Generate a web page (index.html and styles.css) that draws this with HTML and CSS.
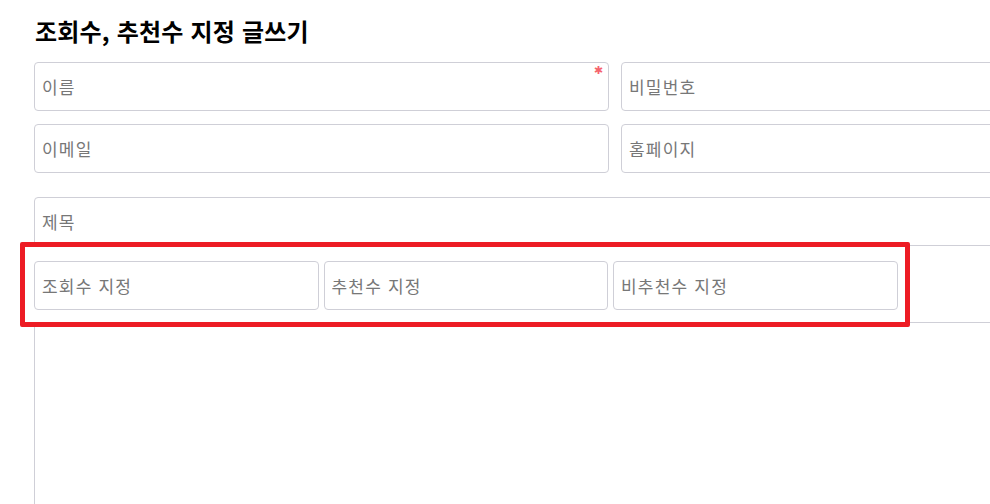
FILE: index.html
```html
<!DOCTYPE html>
<html lang="ko">
<head>
  <meta charset="UTF-8">
  <title>조회수, 추천수 지정 글쓰기</title>
  <link rel="stylesheet" href="styles.css">
</head>
<body>
  <div class="page">
    <h2 class="title">조회수, 추천수 지정 글쓰기</h2>

    <div class="row">
      <div class="field">
        <input type="text" placeholder="이름">
        <span class="req">✱</span>
      </div>
      <div class="field">
        <input type="password" placeholder="비밀번호">
      </div>
    </div>

    <div class="row">
      <div class="field">
        <input type="text" placeholder="이메일">
      </div>
      <div class="field">
        <input type="text" placeholder="홈페이지">
      </div>
    </div>

    <input type="text" class="subject" placeholder="제목">

    <div class="extra">
      <input type="number" placeholder="조회수 지정">
      <input type="number" placeholder="추천수 지정">
      <input type="number" placeholder="비추천수 지정">
    </div>

    <textarea class="content"></textarea>

    <div class="highlight"></div>
  </div>
</body>
</html>
```

FILE: styles.css
```css
body {
  margin: 0;
  overflow: hidden;
  font-family: "Noto Sans CJK KR", "Noto Sans", sans-serif;
  background: #fff;
  color: #111;
}
.page {
  position: relative;
  width: 1164px;
  padding: 0 0 0 34px;
}
.title {
  margin: 0;
  padding: 15px 0 0 1px;
  height: 62px;
  box-sizing: border-box;
  font-size: 24px;
  font-weight: 700;
  line-height: 32px;
  letter-spacing: 0.2px;
  color: #000;
}
.row {
  display: grid;
  grid-template-columns: 575px 575px;
  column-gap: 12px;
  margin-bottom: 13px;
}
.field {
  position: relative;
}
input, textarea {
  display: block;
  width: 100%;
  height: 49px;
  box-sizing: border-box;
  padding: 0 7px;
  border: 1px solid #cfcfd7;
  border-radius: 4px;
  font-family: inherit;
  font-size: 17px;
  letter-spacing: 1.2px;
  color: #333;
  background: #fff;
  outline: none;
}
input::placeholder {
  color: #777;
}
input::-webkit-outer-spin-button,
input::-webkit-inner-spin-button {
  -webkit-appearance: none;
  margin: 0;
}
.req {
  position: absolute;
  top: 3px;
  right: 6px;
  font-family: "DejaVu Sans", sans-serif;
  font-size: 11px;
  line-height: 11px;
  color: #f5646e;
}
.subject {
  margin-top: 24px;
  border-radius: 4px 4px 0 0;
}
.extra {
  display: grid;
  grid-template-columns: repeat(3, 284.5px);
  column-gap: 5px;
  padding: 15px 0 12px;
}
.content {
  height: 300px;
  resize: none;
  border-radius: 0;
}
.highlight {
  position: absolute;
  left: 20px;
  top: 242px;
  width: 890px;
  height: 85px;
  box-sizing: border-box;
  border: 5px solid #ed1c24;
  border-radius: 2px;
}
```
